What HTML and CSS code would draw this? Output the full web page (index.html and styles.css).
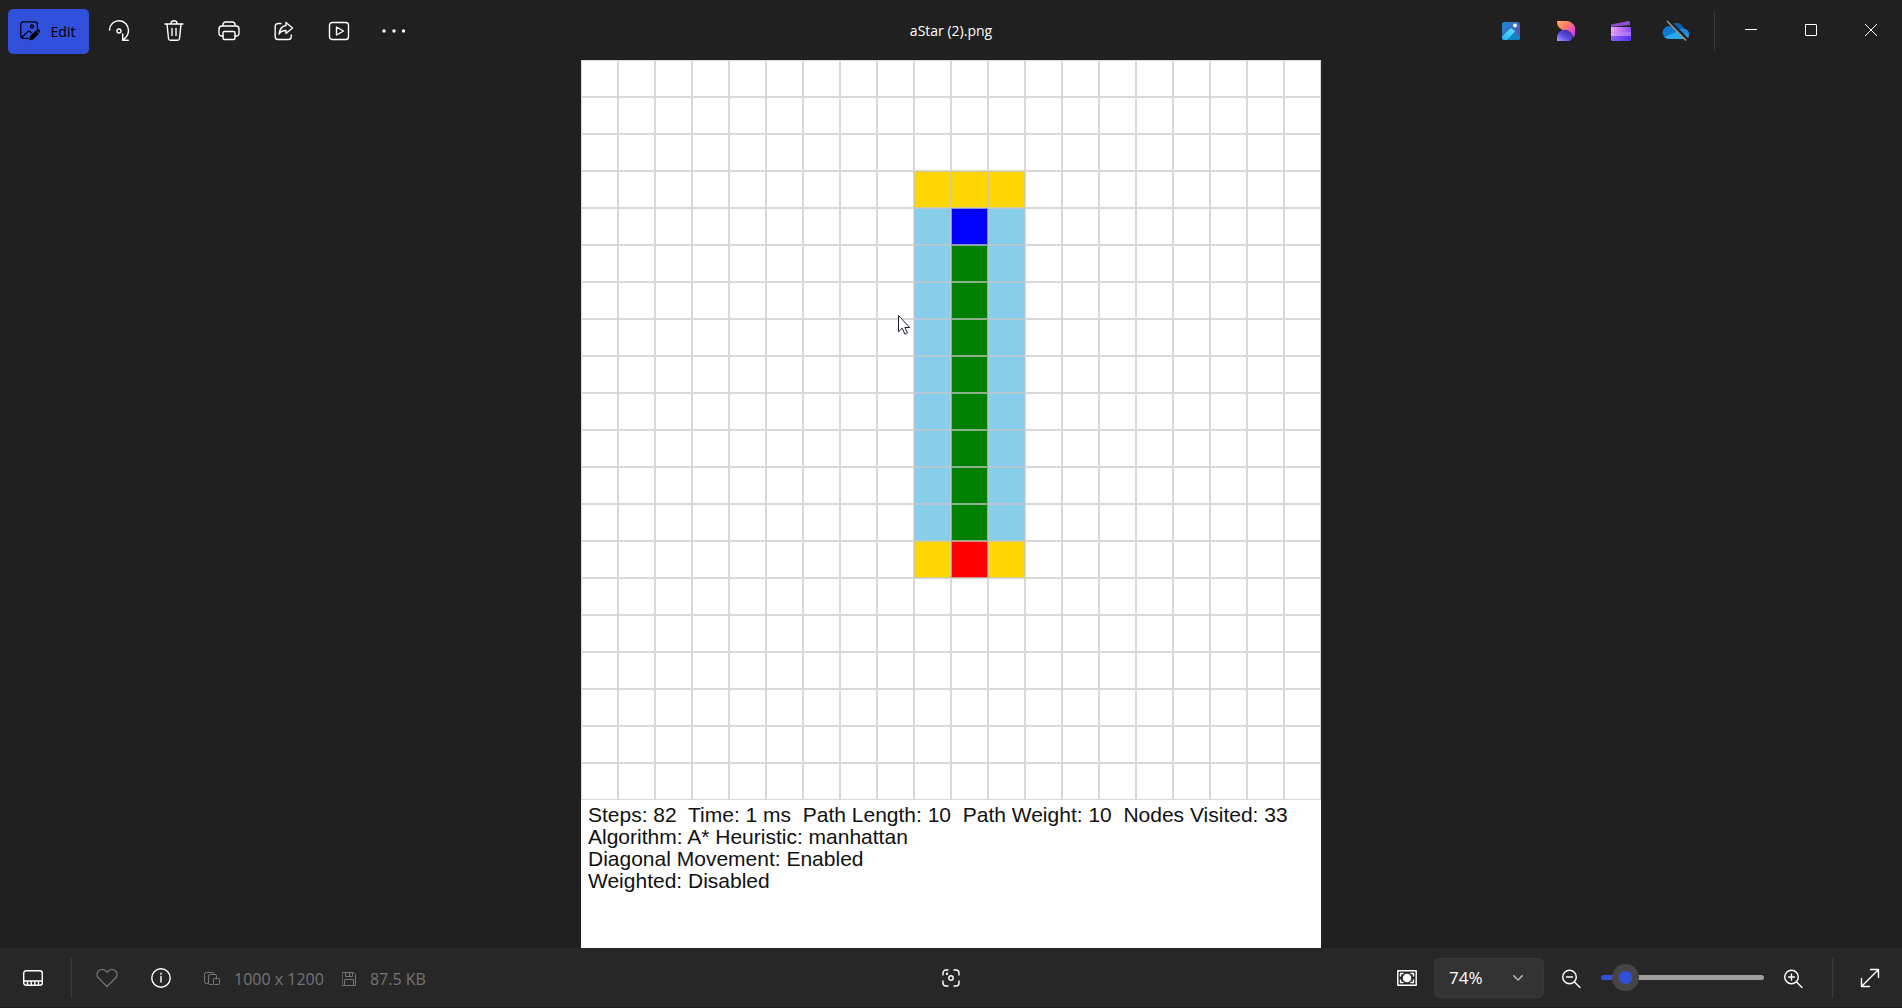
FILE: index.html
```html
<!DOCTYPE html>
<html lang="en">
<head>
<meta charset="utf-8">
<title>aStar (2).png</title>
<link rel="stylesheet" href="styles.css">
</head>
<body>
<header class="topbar">
  <div class="tools">
    <button class="edit" type="button">
      <svg width="20" height="20" viewBox="0 0 20 20" fill="none" stroke="currentColor" stroke-width="1.3" stroke-linecap="round" stroke-linejoin="round"><path d="M8 17.3H3.4a2.6 2.6 0 0 1-2.6-2.6V3.400a2.600 2.600 0 0 1 2.600-2.600h11.300a2.600 2.600 0 0 1 2.600 2.600V7M2 16.300l5.800-5.700q1.200-1 2.400 0l1.300 1.300"/><circle cx="12" cy="5.500" r="1.500"/><path d="M9.800 18.700l.8-3.200 5-5 2.400 2.400-5 5zM17 9.200l1.200-.7 1.400 1.400-.7 1.200z" fill="currentColor"/></svg>
      <span>Edit</span>
    </button>
    <button class="icon" type="button" aria-label="Rotate"><svg width="22" height="22" viewBox="0 0 22 22"><path d="M1.500 10A9.500 9.500 0 0 1 20.500 10.500c0 4-2 7-5.500 9.300M14.700 14v6.300h5.600"/><circle cx="11" cy="11" r="2"/></svg></button>
    <button class="icon" type="button" aria-label="Delete"><svg width="20" height="22" viewBox="0 0 20 22"><path d="M1 4h18M7 3.800a3 3 0 0 1 6 0M3 4l1.500 14.500a2 2 0 0 0 2 1.800h7a2 2 0 0 0 2-1.800L17 4M8 8.500v7M12 8.500v7"/></svg></button>
    <button class="icon" type="button" aria-label="Print"><svg width="22" height="20" viewBox="0 0 22 20"><path d="M5 15H3.500a2.500 2.500 0 0 1-2.500-2.500V8a3 3 0 0 1 3-3h14a3 3 0 0 1 3 3v4.500a2.500 2.500 0 0 1-2.500 2.500H17M5 5V3.500A2.500 2.500 0 0 1 7.500 1h7A2.500 2.500 0 0 1 17 3.500V5"/><rect x="5" y="10.500" width="12" height="8" rx="1.500"/></svg></button>
    <button class="icon" type="button" aria-label="Share"><svg width="20" height="20" viewBox="0 0 20 20"><path d="M7 2.500H4A2.800 2.800 0 0 0 1.200 5.300v10.400A2.800 2.800 0 0 0 4 18.500h10.400a2.800 2.800 0 0 0 2.800-2.800V14M12 1.500l6.500 5.500-6.500 5.500V9.500q-4.500-.3-7 3.500 1-7.500 7-8.500z"/></svg></button>
    <button class="icon" type="button" aria-label="Slideshow"><svg width="22" height="20" viewBox="0 0 22 20"><rect x="1.500" y="1.500" width="19" height="17" rx="2.800"/><path d="M8.500 6v8l7-4z"/></svg></button>
    <button class="icon" type="button" aria-label="See more"><svg width="24" height="6" viewBox="0 0 24 6"><g fill="currentColor" stroke="none"><circle cx="2" cy="3" r="1.700"/><circle cx="12" cy="3" r="1.700"/><circle cx="21.500" cy="3" r="1.700"/></g></svg></button>
  </div>
  <h1 class="title">aStar (2).png</h1>
  <div class="windowside">
    <button class="icon" type="button" aria-label="Photos app"><svg class="art" width="18" height="18" viewBox="0 0 18 18"><defs><linearGradient id="sky" x1="0" y1="0" x2="1" y2="1"><stop stop-color="#1b91dc"/><stop offset=".55" stop-color="#4262b3"/><stop offset="1" stop-color="#7844ad"/></linearGradient><linearGradient id="hill" x1="0" y1="1" x2="1" y2="0"><stop stop-color="#1db3ed"/><stop offset="1" stop-color="#61e3ff"/></linearGradient><clipPath id="tile"><rect width="18" height="18" rx="2.500"/></clipPath></defs><g clip-path="url(#tile)"><path fill="url(#sky)" d="M0 0h18v18H0z"/><path fill="#087cc6" d="M3 18 11 9.800 18 15.500V18z"/><path fill="url(#hill)" d="M0 14.500 8 6.800q1-1 2 0l3.300 2.800L5 18H0z"/><path fill="#1485cc" d="m5 18 8-8 5 4.500V18z"/><circle cx="13" cy="3.500" r="1.900" fill="#fff"/></g></svg></button>
    <button class="icon" type="button" aria-label="Designer"><svg class="art" width="19" height="22" viewBox="0 0 19 22"><defs><linearGradient id="petal" x1="0" y1="0" x2="1" y2="1"><stop stop-color="#ffb35a"/><stop offset=".4" stop-color="#ff776e"/><stop offset=".75" stop-color="#dd45da"/><stop offset="1" stop-color="#8c42f0"/></linearGradient><linearGradient id="leaf" x1="0" y1="1" x2="1" y2="0"><stop stop-color="#a79aff"/><stop offset=".5" stop-color="#5546db"/><stop offset="1" stop-color="#30289b"/></linearGradient></defs><path fill="url(#petal)" d="M1 1h8a10 10 0 0 1 8 17q0-5-5-6.500C5 10 1 8 1 1z"/><path fill="url(#leaf)" d="M1 21v-3a7.500 7.500 0 0 1 15.500-1q0 3-4 4z"/></svg></button>
    <button class="icon" type="button" aria-label="Clipchamp"><svg class="art" width="20" height="20" viewBox="0 0 20 20"><defs><linearGradient id="clip" x1="0" y1="0" x2="1" y2="0"><stop stop-color="#f0a3fa"/><stop offset="1" stop-color="#874cf0"/></linearGradient><linearGradient id="clipbase" x1="0" y1="0" x2="1" y2="0"><stop stop-color="#8a60ff"/><stop offset="1" stop-color="#562ee8"/></linearGradient></defs><path fill="#8d4cd2" d="M0 3.500 17.500 0q1.500 0 1.500 1.500V4L0 6z"/><path fill="url(#clip)" d="M0 6h20v9H0z"/><path fill="#bc83fa" d="M0 11h20v4H6v-3H0z" opacity=".6"/><path fill="url(#clipbase)" d="M0 15h20v3.500q0 1.500-1.500 1.500h-17Q0 20 0 18.500z"/></svg></button>
    <button class="icon" type="button" aria-label="OneDrive is off"><svg class="art" width="28" height="22" viewBox="0 0 28 22"><path fill="#0a61b5" d="M8 8a7 7 0 0 1 13-1l2 2-9 7z"/><path fill="#0b7ad1" d="M2 16.500A6.500 6.500 0 0 1 9.500 6.500q4.500 1 7 5.500L5 18.500q-2-.5-3-2z"/><path fill="#168adc" d="M15 12q3-5 8-3a5 5 0 0 1 3 8z"/><path fill="#28a8ea" d="M2.500 17 15 11.500l12 4q-.5 3.500-4 3.500H7q-3 0-4.500-2z"/><path d="m6 0 20 20" stroke="#202020" stroke-width="3"/><path d="m5 1 19 19.500" stroke="#969290" stroke-width="1.700"/></svg></button>
    <span class="rule"></span>
    <button class="winbtn" type="button" aria-label="Minimize"><svg width="12" height="12" viewBox="0 0 12 12"><path d="M0 5.500h12"/></svg></button>
    <button class="winbtn" type="button" aria-label="Maximize"><svg width="12" height="12" viewBox="0 0 12 12"><rect x=".5" y=".5" width="11" height="11" rx=".5"/></svg></button>
    <button class="winbtn" type="button" aria-label="Close"><svg width="12" height="12" viewBox="0 0 12 12"><path d="m.3.3 11.400 11.400M11.700.3.3 11.700"/></svg></button>
  </div>
</header>

<main class="stage">
  <figure class="photo">
    <svg class="board" viewBox="0 0 740 740" role="img" aria-label="A* path on a grid of 20 by 20 cells">
      <defs><pattern id="grid" width="37" height="37" patternUnits="userSpaceOnUse"><path d="M0 0h37v37H0z" fill="none" stroke="#c8c8c8" stroke-opacity=".7" stroke-width="2"/></pattern></defs>
      <path fill="#ffd700" d="M333 111h111v37H333zM333 481h111v37H333z"/>
      <path fill="#87ceeb" d="M333 148h111v333H333z"/>
      <path fill="#008000" d="M370 185h37v296h-37z"/>
      <path fill="#00f" d="M370 148h37v37h-37z"/>
      <path fill="#f00" d="M370 481h37v37h-37z"/>
      <path fill="url(#grid)" d="M0 0h740v740H0z"/>
      <path d="M317.500 255.500v16.300l3.700-3.600 2.600 5.800q1.800.3 2.600-1l-2.500-5.500h4.800z" fill="#fff" stroke="#1b1b2c" stroke-width="1"/>
    </svg>
    <figcaption class="stats">
      <p>Steps: 82&nbsp; Time: 1 ms&nbsp; Path Length: 10&nbsp; Path Weight: 10&nbsp; Nodes Visited: 33</p>
      <p>Algorithm: A* Heuristic: manhattan</p>
      <p>Diagonal Movement: Enabled</p>
      <p>Weighted: Disabled</p>
    </figcaption>
  </figure>
</main>

<footer class="bottombar">
  <div class="info">
    <button class="icon" type="button" aria-label="Filmstrip"><svg width="20" height="16" viewBox="0 0 20 16"><rect x=".7" y=".7" width="18.600" height="14.600" rx="2.500"/><path d="M1 11h18M4.500 11v4M8.200 11v4M11.800 11v4M15.500 11v4"/></svg></button>
    <span class="rule"></span>
    <button class="icon dim" type="button" aria-label="Favorite"><svg width="22" height="20" viewBox="0 0 22 20"><path d="M11 18.500 2.500 10A5 5 0 0 1 9.500 2.800L11 4.300l1.500-1.500a5 5 0 0 1 7 7.200z"/></svg></button>
    <button class="icon" type="button" aria-label="File info"><svg width="20" height="20" viewBox="0 0 20 20"><circle cx="10" cy="10" r="9.200"/><path d="M10 8.500V14M10 5.300v1"/></svg></button>
    <span class="meta size"><svg width="16" height="14" viewBox="0 0 16 14"><path d="M4 11.500H2.500a2 2 0 0 1-2-2v-7a2 2 0 0 1 2-2h6q2 0 2 2M8.500 12.500H6a1.500 1.500 0 0 1-1.500-1.500V4A1.500 1.500 0 0 1 6 2.500h5A1.500 1.500 0 0 1 12.500 4v1.500"/><rect x="9.500" y="6.500" width="6" height="6" rx="1"/></svg>1000 x 1200</span>
    <span class="meta"><svg width="14" height="14" viewBox="0 0 14 14"><path d="M.5.5h11l2 2v11H.5zM3.500.5v4h7v-4M7.500 1v2.500M2.500 13V7.500h9V13"/></svg>87.5 KB</span>
  </div>
  <button class="icon" type="button" aria-label="Visual search"><svg width="18" height="18" viewBox="0 0 18 18"><path d="M1 6V4a3 3 0 0 1 3-3h2M12 1h2a3 3 0 0 1 3 3v2M17 12v2a3 3 0 0 1-3 3h-2M6 17H4a3 3 0 0 1-3-3v-2"/><circle cx="9" cy="9" r="2.200"/><circle cx="5" cy="4.800" r=".5"/></svg></button>
  <div class="zoom">
    <button class="icon" type="button" aria-label="Zoom to fit"><svg width="20" height="16" viewBox="0 0 20 16"><rect x=".8" y=".8" width="18.400" height="14.400"/><path d="M3.500 6V3.500H6M14 3.500h2.500V6M16.500 10v2.500H14M6 12.500H3.500V10"/><circle cx="10" cy="8" r="3.600" fill="currentColor"/></svg></button>
    <label class="level" aria-label="Zoom level"><select><option>74%</option><option>100%</option></select><svg width="10" height="6" viewBox="0 0 10 6"><path d="m.7.700 4.300 4.300L9.300.7"/></svg></label>
    <button class="icon slim" type="button" aria-label="Zoom out"><svg width="20" height="20" viewBox="0 0 20 20"><circle cx="8.500" cy="9" r="6.800"/><path d="m13.500 14 5.500 5.500M5.500 9h6"/></svg></button>
    <input class="slider" type="range" min="0" max="100" value="8" aria-label="Zoom">
    <button class="icon slim" type="button" aria-label="Zoom in"><svg width="20" height="20" viewBox="0 0 20 20"><circle cx="8.500" cy="9" r="6.800"/><path d="m13.500 14 5.500 5.500M5.500 9h6M8.500 6v6"/></svg></button>
    <span class="rule"></span>
    <button class="icon" type="button" aria-label="Full screen"><svg width="20" height="20" viewBox="0 0 20 20"><path d="M10.500 1.500h8v8M18.500 1.500l-17 17M1.500 10.500v8h8"/></svg></button>
  </div>
</footer>
</body>
</html>
```
FILE: styles.css
```css
* {
  box-sizing: border-box;
}

body {
  margin: 0;
  height: 100vh;
  display: flex;
  flex-direction: column;
  background: #202020;
  color: #fff;
  font-family: "Open Sans", "Noto Sans", sans-serif;
  font-size: 14px;
}

button {
  padding: 0;
  border: 0;
  background: none;
  color: inherit;
  font: inherit;
}

svg {
  display: block;
  flex: none;
}

.icon svg:not(.art),
.winbtn svg,
.meta svg,
.level svg {
  fill: none;
  stroke: currentColor;
  stroke-width: 1.4;
  stroke-linecap: round;
  stroke-linejoin: round;
}

.topbar,
.bottombar {
  flex: none;
  display: grid;
  grid-template-columns: 1fr auto 1fr;
  align-items: center;
  height: 60px;
}

.tools,
.windowside,
.info,
.zoom {
  display: flex;
  align-items: center;
}

.icon {
  width: 50px;
  height: 40px;
  display: flex;
  align-items: center;
  justify-content: center;
}

.rule {
  width: 1px;
  height: 40px;
  background: #3a3a3a;
}

/* Top bar */

.topbar {
  padding-top: 1px;
}

.tools {
  padding-left: 8px;
}

.tools .icon,
.windowside .icon {
  width: 55px;
}

.edit {
  width: 81px;
  height: 45px;
  margin-right: 2px;
  padding-right: 2px;
  border-radius: 5px;
  background: #3050dc;
  color: #000;
  display: flex;
  align-items: center;
  justify-content: center;
  gap: 11px;
}

.title {
  margin: 0;
  font-size: 14px;
  font-weight: 400;
  line-height: 20px;
}

.windowside {
  justify-content: flex-end;
  padding-right: 1px;
}

.windowside .rule {
  margin: 0 6px 0 11px;
}

.winbtn {
  width: 60px;
  height: 60px;
  padding-bottom: 2px;
  display: flex;
  align-items: center;
  justify-content: center;
}

.winbtn svg {
  stroke-width: 1;
}

/* Picture */

.stage {
  flex: 1;
  min-height: 0;
  display: flex;
  justify-content: center;
}

.photo {
  height: 100%;
  aspect-ratio: 1000 / 1200;
  margin: 0;
  background: #fff;
  overflow: hidden;
}

.board {
  width: 100%;
}

.stats {
  padding: 4px 7px;
  color: #111;
  font-family: "Liberation Sans", Arial, sans-serif;
  font-size: 21px;
  line-height: 22px;
  white-space: nowrap;
}

.stats p {
  margin: 0;
}

/* Bottom bar */

.bottombar {
  background: #272727;
  border-bottom: 1px solid #1c1a1b;
}

.info {
  padding-left: 8px;
}

.info .rule {
  margin: 0 10px 0 13px;
}

.dim {
  margin-right: 4px;
  color: #707070;
}

.meta {
  display: flex;
  align-items: center;
  gap: 14px;
  padding-top: 2px;
  color: #757575;
  font-size: 16px;
}

.size {
  margin: 0 18px;
}

.meta svg {
  stroke-width: 1;
}

.zoom {
  justify-content: flex-end;
  padding-right: 7px;
}

.level {
  display: grid;
  align-items: center;
  width: 110px;
  height: 40px;
  margin: 0 7px 0 2px;
}

.level > * {
  grid-area: 1 / 1;
}

.level select {
  width: 100%;
  height: 100%;
  padding: 0 14px;
  appearance: none;
  border: 1px solid #393939;
  border-radius: 5px;
  background: #333;
  color: #fff;
  font: inherit;
  font-size: 17px;
}

.level svg {
  justify-self: end;
  margin-right: 21px;
  color: #bbb;
  pointer-events: none;
}

.slim {
  width: 40px;
}

.slider {
  width: 163px;
  height: 28px;
  margin: 0 9px 0 10px;
  appearance: none;
  background: none;
}

.slider::-webkit-slider-runnable-track {
  height: 5px;
  border-radius: 3px;
  background: linear-gradient(to right, #3050dc 16%, #9c9c9c 16%);
}

.slider::-webkit-slider-thumb {
  appearance: none;
  width: 27px;
  height: 27px;
  margin-top: -11px;
  border-radius: 50%;
  background: radial-gradient(circle, #3050dc 6px, #454545 7px);
}

.zoom .rule {
  margin: 0 12px 0 19px;
}
```
